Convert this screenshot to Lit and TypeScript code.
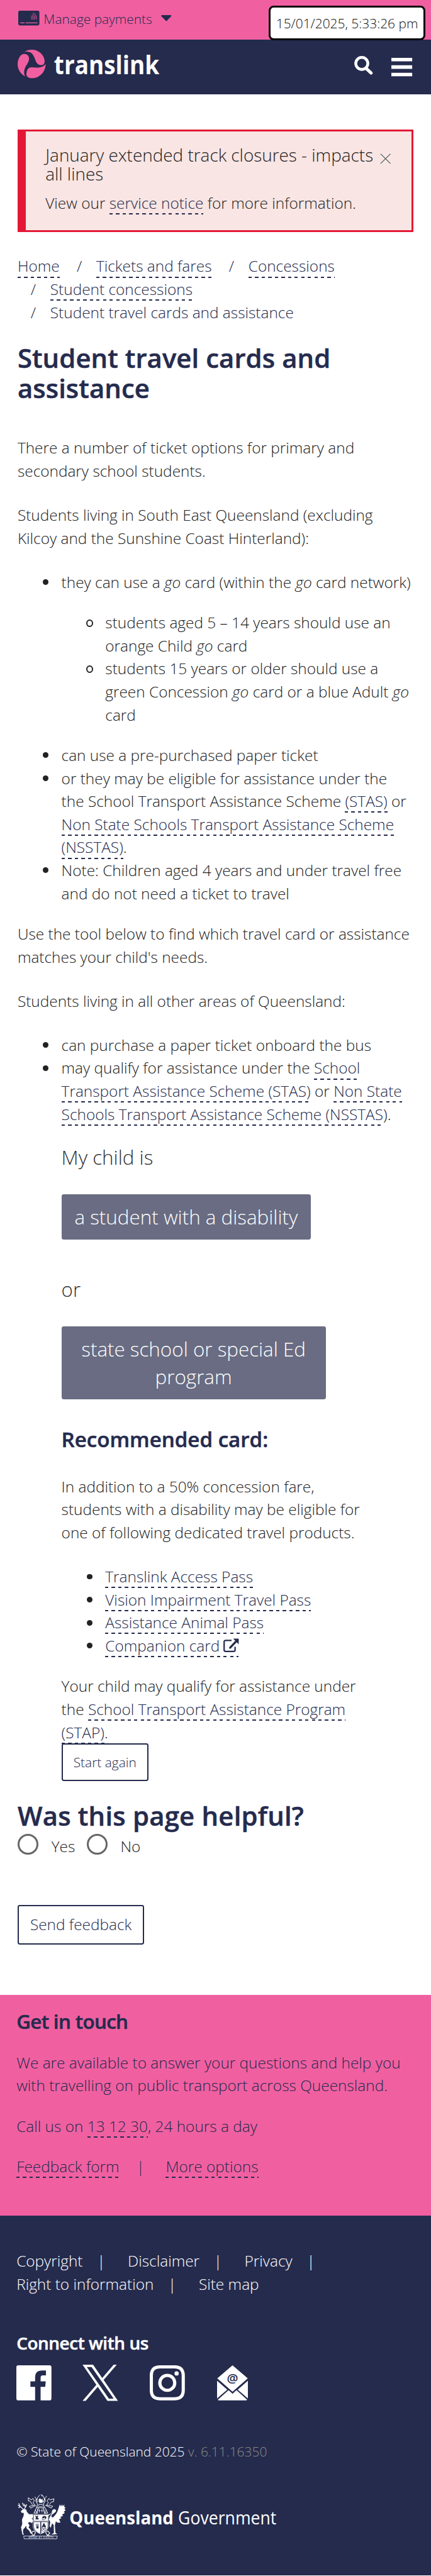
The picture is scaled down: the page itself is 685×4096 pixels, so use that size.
import { LitElement, html, css, svg } from "lit";
import { customElement } from "lit/decorators.js";

const crumbs = ["Home", "Tickets and fares", "Concessions", "Student concessions"];
const passes = ["Translink Access Pass", "Vision Impairment Travel Pass", "Assistance Animal Pass"];
const footerLinks = ["Copyright", "Disclaimer", "Privacy", "Right to information", "Site map"];

const cardIcon = html`<svg class="card" viewBox="0 0 19.3 13.5">
  <rect width="19.3" height="13.5" rx="1.4" fill="#252b4d" />
  <g fill="none" stroke="#f060a1" stroke-width=".55" stroke-linecap="round">
    <path d="M11.9 5.4q1 1 .3 2.3M12.6 4.3q1.9 1.6.9 3.5M13.1 3.2q2.9 2 1.7 4.6M13.8 2.1q3.7 2.2 2.5 5.7" />
  </g>
  <path d="M1.8 10.7h4.1v.8H1.8zM6.8 10.7h10.7v.8H6.8z" fill="#f060a1" />
</svg>`;

const logo = html`<svg class="logo" viewBox="0 0 130 27">
  <g fill="#f060a1">
    <path d="M6.2 2.1C8.2.6 10.5 0 12.9 0c6 0 11 4.4 11.7 10 .2 2.200-.9 4.100-2.800 4.100-2.700 0-4.500-1.600-5.400-4.100C15.200 6.500 13.700 2 9.200 1.800c-1-.1-2 .1-3 .3z" />
    <path d="M5.800 3.900c3 0 4.700 1.800 4.600 4.600-.1 2.800-2.200 5-3.500 7.700-1.300 2.900-1.300 5.600-.2 8.200C2.600 22 0 18 0 13.400 0 9.700 2 3.900 5.800 3.900z" />
    <path d="M8 22.400c.1-3.700 1.600-6.300 4.800-6.300 2 0 4 .5 6.300.2 3-.3 5.200-1.400 6.400-3.300C25.600 20.200 20 26 12.800 26 9.800 26 8 24.600 8 22.400z" />
  </g>
  <text x="33.200" y="22.500" textLength="96" lengthAdjust="spacingAndGlyphs" font-size="23.500" font-weight="700" fill="#fff">translink</text>
</svg>`;

const stroke = (d: string, w: number) => svg`<path d=${d} stroke-width=${w} />`;

const crest = html`<svg class="crest" viewBox="24 28 396 368">
  <g fill="none" stroke="#fff" stroke-linecap="round" stroke-linejoin="round">
    ${stroke("M70 152 50 132 28 118M44 126 34 104M50 132 32 138M78 150 92 128 98 112M92 128 72 122 64 100M92 128 76 108", 6)}
    ${stroke("M112 58 138 74 150 62 162 84 150 94 164 118 120 128 132 142 176 118M112 58 112 82 128 86 146 116M322 66 290 74 280 62 266 84 276 96 262 118 312 126 300 142 252 118M322 66 318 90 300 92 286 112", 5)}
    ${stroke("M166 50 178 66 172 80 182 100 190 116M204 36 188 56 182 76M262 44 246 64 252 82 240 100 236 116M226 34 240 54 244 74M216 30 226 44M178 66 186 92M246 64 238 92", 5)}
    ${stroke("M190 118Q212 104 236 118L246 136Q212 124 180 136ZM180 136 158 182 182 184 192 142M246 136 272 182 246 184 236 142M170 156 180 178M260 154 252 178", 5)}
    ${stroke("M185 186 188 148Q212 130 238 148L244 186", 4)}
    ${stroke("M202 152V176M194 162H210M224 152V176M216 162H232", 4)}
    ${stroke("M150 194H276V250H150ZM152 250V300Q164 338 213 354 262 338 274 300V250", 4)}
    ${stroke("M152 362 138 348 150 332Q164 326 170 342L160 366 130 372M272 362 288 348 274 332Q260 326 254 342L268 366 300 372", 6)}
    ${stroke("M76 371H350L345 394H80Z", 4)}
  </g>
  <g fill="#fff">
    <path d="M50 168 68 152 94 152 100 172 118 192 148 192 152 212 140 228 150 244 142 266 126 256 108 262 122 284 114 300 132 320 142 346 132 352 118 326 98 308 94 286 84 302 70 316 68 342 76 360 64 360 58 332 52 298 62 274 60 236 74 202 74 182 56 180Z" />
    <path d="M264 204 304 180Q304 150 328 150 346 156 336 172 318 186 302 200 298 222 316 216 344 190 352 166L370 112 380 128 390 110 394 128 408 112 406 132 418 136 408 148 418 160 402 172 412 182 388 196 398 206 374 214 384 226 364 232 376 260 352 262 338 250 330 284 334 344 350 354 300 360 322 346 320 280 306 268 296 304 286 288 292 256 280 234 292 206 310 178 276 206Z" />
    <path d="M156 198H272V246H156ZM158 256H210V350Q166 336 158 298ZM218 256H270V298Q262 336 218 350Z" />
    <path d="M196 70 208 62 218 72 232 64 226 78 240 84 226 92 230 104 214 96 202 104 204 92 190 84 202 80Z" />
  </g>
  <g fill="#252b4d">
    <path d="M168 204q12 6 24 0 4 12-6 14 12 4 12 16h-28q2-12 6-16-8-4-8-14zM224 226q2-20 20-20 18 2 16 18l-14 14q6-14-4-20-2 14-18 8zM222 234h22v5h-22zM176 266l6 20h-8zM187 264l4 22h-7zM200 266l-4 20h-6zM176 290h22l-4 20h-14zM240 262l18 34h-36z" />
  </g>
  <circle cx="238" cy="314" r="19" fill="#fff" stroke="#252b4d" stroke-width="3" />
  <path d="m228 306 20 18M248 304l-20 20M232 302l-6 6M244 302l8 8" stroke="#252b4d" stroke-width="5" />
  <text x="116" y="388" textLength="200" lengthAdjust="spacing" font-size="14" font-weight="600" fill="#fff">AUDAX AT FIDELIS</text>
</svg>`;

@customElement("app-root")
export class AppRoot extends LitElement {
  static styles = css`
    :host { display: block; }
    *, *::before { box-sizing: border-box; }
    .page {
      zoom: 1.743; width: 393px; position: relative; overflow: hidden;
      background: #fff; color: #222; font: 300 14px/21px "Open Sans", sans-serif;
    }
    svg { display: block; flex: none; overflow: visible; }
    svg text { font-family: "Open Sans", sans-serif; }
    p, h1, h2, h3, ul, ol { margin: 0; padding: 0; }
    a {
      color: #252b4d; padding-bottom: 1.2px; text-decoration: none;
      background: repeating-linear-gradient(90deg, #252b4d 0 3px, transparent 3px 6px) left bottom / 100% 1.150px no-repeat;
      -webkit-box-decoration-break: clone; box-decoration-break: clone;
    }
    .topbar { height: 36px; background: #f060a1; display: flex; padding: 9.700px 0 0 16.500px; color: #252b4d; }
    .card { width: 19.300px; height: 13.500px; }
    .topbar span { font-size: 12px; line-height: 16px; margin: 0 8px 0 4px; }
    .caret { width: 9.500px; height: 5.500px; margin-top: 4.200px; }
    .clock {
      position: absolute; left: 245px; top: 5px; width: 143px; height: 32px; border: 2px solid #000; border-radius: 4.500px;
      background: #fff; color: #111; font-size: 12px; line-height: 28.800px; padding-left: 5px; white-space: nowrap;
    }
    .header { height: 50px; background: #252b4d; display: flex; padding: 9.500px 17.300px 0 16px; }
    .logo { width: 130px; height: 27px; }
    .search { width: 17px; height: 17px; margin: 5.700px 16.500px 0 auto; }
    .burger { width: 19px; height: 17px; margin-top: 7.100px; }
    .alert {
      margin: 32px 16px 0; height: 94px; border: 2px solid #e31836; border-left-width: 8px; background: #f9e5e3;
      padding: 13.600px 18px 0; display: flex; justify-content: space-between;
    }
    .alert h3 { font-size: 16px; line-height: 17.100px; font-weight: 300; margin-bottom: 7.600px; white-space: nowrap; }
    .close { width: 10px; height: 10px; margin: 6.500px 1px 0 0; }
    .crumbs { margin: 20.640px 16px 0; list-style: none; color: #252b4d; }
    .crumbs li { display: inline-block; line-height: 21.050px; vertical-align: top; }
    .crumbs li + li::before { content: "/"; padding: 0 13px 0 12px; }
    h1, h2, h3.b { color: #252b4d; font-weight: 600; -webkit-text-stroke: .3px #252b4d; stroke-linejoin: round; }
    h1, h2 { font-size: 24px; line-height: 27.100px; letter-spacing: .05px; }
    h1 { margin: 17.100px 16px 31.250px; }
    .body { padding: 0 16px; }
    .body p { margin-bottom: 19.200px; }
    .body ul { list-style: none; padding-left: 40px; margin-bottom: 16px; }
    .body li ul { margin-top: 16px; }
    .body li::before {
      content: ""; display: inline-block; width: 5.100px; height: 5.100px; border-radius: 50%; background: #222;
      margin: 0 11.900px 0 -17px; vertical-align: 2.700px;
    }
    .body li li::before {
      width: 6.300px; height: 7px; background: none; border: 1.200px solid #222; margin: 0 11.300px 0 -17.600px; vertical-align: 1.300px;
    }
    .tool { padding: 0 40px; margin-top: -.300px; }
    .tool .label { font-size: 18px; line-height: 25.200px; margin: 0 0 21.300px; color: #333; }
    .choice {
      display: table; background: #696c82; color: #fff; font-size: 18px; line-height: 25.200px; border-radius: 2px;
      padding: 8px 12px; text-align: center; margin-bottom: 33.200px;
    }
    .choice.wide { width: 241px; margin-bottom: 26.900px; }
    h3.b { font-size: 19px; line-height: 20px; }
    .tool h3.b { margin-bottom: 22.350px; }
    .tool .last { margin: 0; }
    .ext { display: inline-block; width: 14px; height: 13px; margin: 0 0 -1px 3.300px; vertical-align: baseline; }
    .outline {
      display: flex; align-items: center; justify-content: center; border: 1.200px solid #252b4d; border-radius: 2px; color: #252b4d;
    }
    .again { width: 79.400px; height: 34px; font-size: 12px; margin-top: -.450px; }
    .helpful { margin: 18.200px 16px 3.100px; letter-spacing: .130px; }
    .radios { display: flex; margin: 0 16px; height: 19px; }
    .radios i { width: 19px; height: 19px; border: 2px solid #666; border-radius: 50%; }
    .radios span { margin: 1.350px 10.500px 0 11.900px; }
    .send { width: 115.600px; height: 36px; margin: 45.900px 16px 46px; }
    .contact { background: #f060a1; color: #252b4d; padding: 14.300px 15px 33.600px; }
    .contact h3.b { font-size: 18px; margin-bottom: 17.100px; letter-spacing: -.380px; }
    .contact p + p { margin-top: 16.050px; }
    .contact i { font-style: normal; margin: 0 19.200px 0 15.600px; }
    .footer { background: #252b4d; color: #fff; padding: 31.500px 15px 33.200px; }
    .links { list-style: none; width: 300px; }
    .links li { display: inline-block; vertical-align: top; line-height: 20.950px; }
    .links li:not(:last-child)::after { content: "|"; padding: 0 16.800px 0 13px; }
    .footer h3.b { color: #fff; font-size: 16px; margin: 32.750px 0 10.550px; letter-spacing: -.240px; -webkit-text-stroke-color: #fff; }
    .social { display: flex; height: 32px; }
    .twitter { margin: -.300px 0 0 28px; }
    .insta { margin-left: 29.100px; }
    .mail { margin-left: 29.600px; }
    .copy { font-size: 12px; line-height: 18px; margin: 37.750px 0 29.850px; }
    .copy span { color: #8a8a86; }
    .gov { display: flex; padding-left: 1px; }
    .crest { width: 44px; height: 40.900px; }
    .govtext { width: 193px; height: 40.900px; }
  `;

  render() {
    return html`<div class="page">
      <div class="topbar">
        ${cardIcon}<span>Manage payments</span>
        <svg class="caret" viewBox="0 0 9.5 5.500"><path d="M.6 0h8.300q.8.300.4 1L5.300 5.200q-.5.400-1 0L.2 1Q-.2.300.600 0z" fill="#252b4d" /></svg>
      </div>
      <div class="clock">15/01/2025, 5:33:26 pm</div>
      <div class="header">
        ${logo}
        <svg class="search" viewBox="0 0 17 17"><circle cx="6.900" cy="6.800" r="5.500" fill="none" stroke="#fff" stroke-width="2.600" /><path d="m11.100 11.600 4.300 3.900" stroke="#fff" stroke-width="2.900" stroke-linecap="round" /></svg>
        <svg class="burger" viewBox="0 0 19 17"><path d="M0 0h19v3.200H0zM0 6.800h19V10H0zM0 13.600h19v3.200H0z" fill="#fff" /></svg>
      </div>
      <div class="alert">
        <div>
          <h3>January extended track closures - impacts<br />all lines</h3>
          <p>View our <a>service notice</a> for more information.</p>
        </div>
        <svg class="close" viewBox="0 0 10 10"><path d="m.5 1.400 9 8.600M9.500 1.400.500 10" stroke="#fff" stroke-width=".9" /><path d="m.5.500 9 8.800M9.500.500.500 9.300" stroke="#666" stroke-width=".8" /></svg>
      </div>
      <ol class="crumbs">
        ${crumbs.map((c) => html`<li><a>${c}</a></li> `)}<li>Student travel cards and assistance</li>
      </ol>
      <h1>Student travel cards and assistance</h1>
      <div class="body">
        <p>There a number of ticket options for primary and secondary school students.</p>
        <p>Students living in South East Queensland (excluding Kilcoy and the Sunshine Coast Hinterland):</p>
        <ul>
          <li>they can use a <em>go</em> card (within the <em>go</em> card network)
            <ul>
              <li>students aged 5 – 14 years should use an orange Child <em>go</em> card</li>
              <li>students 15 years or older should use a green Concession <em>go</em> card or a blue Adult <em>go</em> card</li>
            </ul>
          </li>
          <li>can use a pre-purchased paper ticket</li>
          <li>or they may be eligible for assistance under the the School Transport Assistance Scheme <a>(STAS)</a> or <a>Non State Schools Transport Assistance Scheme (NSSTAS)</a>.</li>
          <li>Note: Children aged 4 years and under travel free and do not need a ticket to travel</li>
        </ul>
        <p>Use the tool below to find which travel card or assistance matches your child's needs.</p>
        <p>Students living in all other areas of Queensland:</p>
        <ul>
          <li>can purchase a paper ticket onboard the bus</li>
          <li>may qualify for assistance under the <a>School Transport Assistance Scheme (STAS)</a> or <a>Non State Schools Transport Assistance Scheme (NSSTAS</a>).</li>
        </ul>
        <div class="tool">
          <p class="label">My child is</p>
          <div class="choice">a student with a disability</div>
          <p class="label">or</p>
          <div class="choice wide">state school or special Ed program</div>
          <h3 class="b">Recommended card:</h3>
          <p>In addition to a 50% concession fare, students with a disability may be eligible for one of following dedicated travel products.</p>
          <ul>
            ${passes.map((p) => html`<li><a>${p}</a></li>`)}
            <li><a>Companion card<svg class="ext" viewBox="0 0 14 13"><path d="M7.500 1.900H2.200Q.700 1.900.700 3.300v7.300q0 1.400 1.500 1.400h7q1.500 0 1.500-1.400V7.800" fill="none" stroke="#252b4d" stroke-width="1.300" /><path d="M6.200 8.600 11.500 2.900" stroke="#252b4d" stroke-width="1.900" stroke-linecap="round" /><path d="M8.900.300H14v5.100z" fill="#252b4d" /></svg></a></li>
          </ul>
          <p class="last">Your child may qualify for assistance under the <a>School Transport Assistance Program (STAP)</a>.</p>
          <div class="outline again"><span>Start again</span></div>
        </div>
      </div>
      <h2 class="helpful">Was this page helpful?</h2>
      <div class="radios"><i></i><span>Yes</span><i></i><span>No</span></div>
      <div class="outline send"><span>Send feedback</span></div>
      <div class="contact">
        <h3 class="b">Get in touch</h3>
        <p>We are available to answer your questions and help you with travelling on public transport across Queensland.</p>
        <p>Call us on <a>13 12 30</a>, 24 hours a day</p>
        <p><a>Feedback form</a><i>|</i><a>More options</a></p>
      </div>
      <div class="footer">
        <ul class="links">${footerLinks.map((l) => html`<li>${l}</li> `)}</ul>
        <h3 class="b">Connect with us</h3>
        <div class="social">
          <svg width="32" height="32" viewBox="0 0 32 32"><path d="M1.800 0h28.400Q32 0 32 1.800v28.400q0 1.800-1.800 1.800H22.100V19.600h4.200l.5-4.900h-4.700v-3.100q0-2.400 2-2.400H27V4.800h-3.600q-6.300 0-6.300 6.400v3.500h-4.300v4.900h4.300V32H1.800Q0 32 0 30.200V1.800Q0 0 1.800 0z" fill="#fff" /></svg>
          <svg class="twitter" width="32.500" height="33" viewBox="0 0 1200 1227"><path fill="#fff" d="M714.163 519.284L1160.890 0H1055.030L667.137 450.887L357.328 0H0L468.492 681.821L0 1226.370H105.866L515.491 750.218L842.672 1226.370H1200L714.137 519.284H714.163ZM569.165 687.828L521.697 619.934L144.011 79.694H306.615L611.412 515.685L658.880 583.579L1055.080 1150.300H892.476L569.165 687.854V687.828Z" /></svg>
          <svg class="insta" width="32" height="32" viewBox="0 0 32 32" fill="none" stroke="#fff" stroke-width="2.900"><path d="M9.400 1.450h13.200q7.950 0 7.950 7.950v13.200q0 7.950-7.950 7.950H9.400q-7.950 0-7.950-7.950V9.400q0-7.950 7.950-7.950z" /><circle cx="16" cy="16" r="6.800" /><circle cx="24.500" cy="7.400" r="1.950" fill="#fff" stroke="none" /></svg>
          <svg class="mail" width="28.100" height="32" viewBox="0 0 28.100 32" fill="#fff"><path d="M14.100 0 28 11.900 14.100 24.100.200 11.900zM0 14 9.300 22.200 0 30.200zM28.100 14 18.800 22.200l9.300 8zM10.500 22.600l3.600 3.300 3.600-3.300 9.700 8.800q-.3.600-1 .6H1.700q-.8 0-1-.6z" /><text x="14" y="15.800" font-size="11.500" font-weight="600" text-anchor="middle" fill="#252b4d">@</text></svg>
        </div>
        <p class="copy">© State of Queensland 2025 <span>v. 6.11.16350</span></p>
        <div class="gov">
          ${crest}
          <svg class="govtext" viewBox="0 0 193 40.900" fill="#fff"><text x="3" y="27.800" font-size="16.500" font-weight="700" textLength="95" lengthAdjust="spacingAndGlyphs">Queensland</text><text x="102.200" y="27.800" font-size="17" font-weight="400" textLength="89.600" lengthAdjust="spacingAndGlyphs">Government</text></svg>
        </div>
      </div>
    </div>`;
  }
}
